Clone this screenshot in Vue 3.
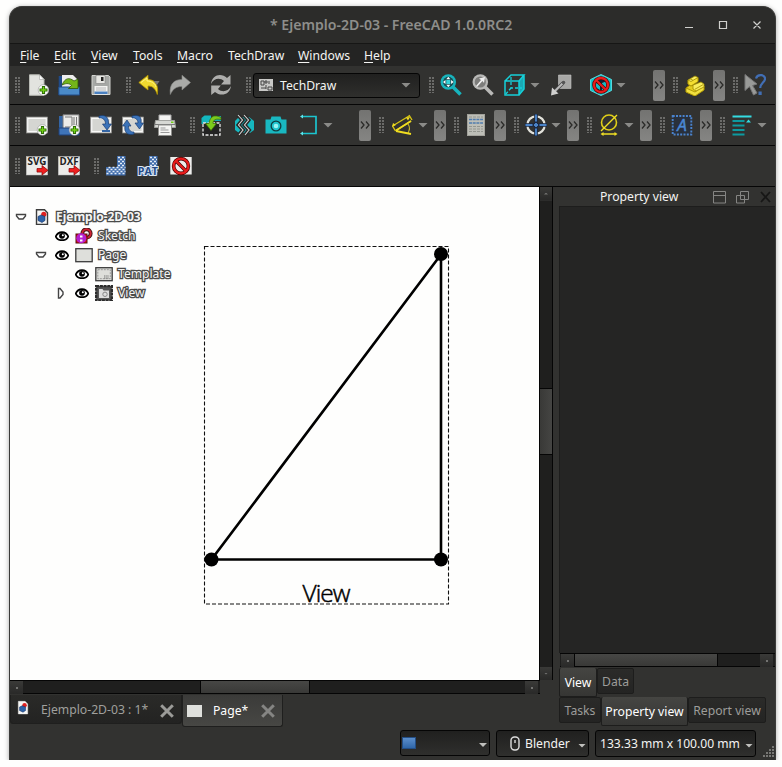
<script setup>
const menu = [
  ['F', 'ile', 34], ['E', 'dit', 37], ['V', 'iew', 42], ['T', 'ools', 44],
  ['M', 'acro', 51], ['', 'TechDraw', 70], ['W', 'indows', 66], ['H', 'elp', 40],
]

// [kind, gap before the item, icon name]
const rowMain = [
  ['grip', 5], ['icon', 6, 'new'], ['icon', 9, 'open'], ['icon', 10, 'save'],
  ['grip', 14], ['icon', 6, 'undo'], ['icon', 9, 'redo'], ['icon', 19, 'refresh'],
  ['grip', 14], ['combo', 1], ['grip', 9], ['icon', 5, 'fit'], ['icon', 10, 'fitsel'],
  ['icon', 10, 'cube'], ['arrow', 4], ['icon', 10, 'align'], ['icon', 18, 'nocube'], ['arrow', 4],
  ['more', 27], ['grip', 8], ['icon', 5, 'bricks'], ['more', 7], ['grip', 8], ['icon', 5, 'whats'],
]
const rowDraw = [
  ['grip', 5], ['icon', 5, 'page'], ['icon', 10, 'template'], ['icon', 10, 'redraw'], ['icon', 10, 'redrawAll'], ['icon', 10, 'print'],
  ['grip', 14], ['icon', 5, 'insert'], ['icon', 10, 'broken'], ['icon', 10, 'camera'], ['icon', 11, 'bracket'], ['arrow', 3],
  ['more', 26], ['grip', 8], ['icon', 6, 'angle'], ['arrow', 5], ['more', 6], ['grip', 8], ['icon', 5, 'sheet'],
  ['more', 7], ['grip', 8], ['icon', 5, 'target'], ['arrow', 4], ['more', 6], ['grip', 8], ['icon', 5, 'diameter'], ['arrow', 4],
  ['more', 6], ['grip', 8], ['icon', 5, 'annotate'], ['more', 7], ['grip', 8], ['icon', 5, 'lines'], ['arrow', 4],
]
const rowExport = [
  ['grip', 5], ['icon', 5, 'svg'], ['icon', 10, 'dxf'], ['grip', 14], ['icon', 5, 'hatch'], ['icon', 10, 'pat'], ['icon', 11, 'nohatch'],
]
const toolbars = [rowMain, rowDraw, rowExport]

const plus = '<circle cx="16.5" cy="16" r="5.300" fill="#fff" stroke="#999" stroke-width=".6"/><path d="M16.500 12v8M12.500 16h8" stroke="#2c6b05" stroke-width="3.200"/><path d="M16.500 13v6M13.500 16h6" stroke="#73d216" stroke-width="1.300"/>'
const mag = (c, d) => `<path d="M13 13l7.500 7.500" stroke="${c}" stroke-width="3.600"/><circle cx="8.300" cy="8" r="7.800" fill="${c}"/><circle cx="8.300" cy="8" r="5.600" fill="${d}"/>`
const cubeLines = '<path d="M1 6L7 1h13v14l-5 6H1z" fill="#333331"/><path d="M15 7l5-6v14l-5 6z" fill="#1aa9b5"/><path d="M1 7h14v14H1zM1 7l6-6h13l-5 6M20 1v14l-5 6" fill="none" stroke="#16d0d8" stroke-width="1.500"/><path d="M7 3v11h11M7 14l-6 7" fill="none" stroke="#16d0d8" stroke-width="1.300" stroke-dasharray="3 2"/>'
const ban = (r) => `<g fill="none"><circle cx="11" cy="11" r="${r}" stroke="#4a0000" stroke-width="3.600"/><path d="M${11 - r * 0.7} ${11 - r * 0.7}L${11 + r * 0.7} ${11 + r * 0.7}" stroke="#4a0000" stroke-width="3.400"/><circle cx="11" cy="11" r="${r}" stroke="#e81c1c" stroke-width="2.300"/><path d="M${11 - r * 0.7} ${11 - r * 0.7}L${11 + r * 0.7} ${11 + r * 0.7}" stroke="#e81c1c" stroke-width="2.100"/></g>`
const redArrow = '<path d="M11 13.500h5v-3l6 4.800-6 4.800v-3h-5z" fill="#ef2020" stroke="#800" stroke-width=".7"/>'
const label = (t) => `<rect x=".3" y="1.500" width="21.400" height="18.500" fill="#ecece9" stroke="#bbb" stroke-width=".5"/><text x="11" y="10" text-anchor="middle" textLength="19" lengthAdjust="spacingAndGlyphs" font-family="Open Sans" font-weight="700" font-size="10" fill="#222">${t}</text>`
const hatchPoly = 'M1 12h11V1h8.500v19.500H1z'
const hatchShape = `<path d="${hatchPoly}" fill="#3f6cab"/><path d="M13 2.500h7M13 6.500h7M13 10.500h7M1.500 14.500h18.500M1.500 18.500h18.500" stroke="#e6edf6" stroke-width="1.700" stroke-dasharray="2 2"/><path d="M15 4.500h5M15 8.500h5M3.500 12.500h17M3.500 16.500h17" stroke="#e6edf6" stroke-width="1.700" stroke-dasharray="2 2"/>`
const sheetBox = '<rect x=".5" y="3" width="21" height="16" fill="#e4e4e1" stroke="#8d8d8a" stroke-width=".7"/><rect x="1.900" y="4.500" width="18.200" height="13" fill="#d5d6d2" stroke="#fff" stroke-width=".8"/>'

const icons = {
  new: '<path d="M2.500.8h10l4.500 4.500v16h-14.500z" fill="#e2e3df" stroke="#b9bbb5"/><path d="M12.500.8v4.700h4.500z" fill="#fff" stroke="#a5a6a2" stroke-width=".6"/>' + plus,
  open: '<path d="M.7 2h7v18h-7z" fill="#204a87"/><path d="M4 1h11l4 4v9H4z" fill="#eee"/><path d="M.8 13h20.700v8H.8z" fill="#4a8ac8" stroke="#204a87"/><path d="M4 11C7 4 11 3 16 7l4-2v9.500h-9.500l3-3c-3-3-6-2-9.500-.5z" fill="#73b51a" stroke="#2f5906" stroke-width=".8"/>',
  save: '<path d="M2 1.500h16.500l1.500 1.500v17.500H2z" fill="#a6a8a5" stroke="#d3d4d0"/><rect x="6" y="1.500" width="9" height="8" fill="#e6e6e2" stroke="#777" stroke-width=".5"/><rect x="11" y="3" width="2.500" height="4" fill="#222"/><rect x="4.500" y="12" width="13" height="8.500" fill="#f2f2f0"/><path d="M6 14h10M6 16h10" stroke="#aaa" stroke-width=".8"/><rect x="4.500" y="17.500" width="13" height="2.500" fill="#4a80c0"/>',
  undo: '<path d="M.8 8.500L10 1.200v4.300c6 0 11 4 9.300 15C17.500 15 15 12 10 12v4z" fill="#f0da30" stroke="#b49500" stroke-width=".8"/><path d="M15.500 7h6l-2.500 4z" fill="#777"/><path d="M3 8.500l6-4.500v3c4 0 8 2 9 6" fill="none" stroke="#fff58c" stroke-width=".9"/>',
  redo: '<path d="M21.500 8.500L13 1.200v4.300C6 5.500 0 9 1.300 20.500 4 15 7 12.500 13 12.500V16z" fill="#aaaba8" stroke="#8a8b88" stroke-width=".6"/>',
  refresh: '<path d="M1 10C2 0 12-1 17 4l3.500-3v9.500h-9.500L14 7C10 3.500 4 4 1 10zM21 12c-1 9.500-11 10.500-16 6L1.200 21v-9.500h9.600L8 15c4 3.500 10 3 13-3z" fill="#aeaeac"/>',
  fit: mag('#17b4bd', '#37d3d8') + '<circle cx="8.300" cy="8" r="5.400" fill="#174f56"/><path d="M8.300 2.700l2 2.500h-4zM8.300 13.300l2-2.500h-4zM3 8l2.500-2v4zM13.600 8l-2.500-2v4z" fill="#fff"/><rect x="6.300" y="6" width="4" height="4" fill="#37d3d8"/>',
  fitsel: mag('#b9b9b7', '#7d7d7b') + '<path d="M4 12l5-6-2-1.500 6-1.500-1 6-1.500-2L5 13z" fill="#eee"/>',
  cube: cubeLines,
  align: '<path d="M8.500 1h12.500v13.500H8.500z" fill="#a8a8a6" stroke="#c5c5c3" stroke-width=".6"/><path d="M13 9l-8 8" stroke="#444" stroke-width="3.300"/><path d="M13 9l-8 8" stroke="#bbb" stroke-width="2"/><path d="M1 21.500l1-8 6.500 6z" fill="#d0d0ce"/><circle cx="13.500" cy="8.500" r="1.800" fill="#555"/>',
  nocube: '<path d="M11 .5l10.500 5v11L11 21.500.5 16.500v-11z" fill="#14c3cc" stroke="#5ee0e4" stroke-width=".9"/><circle cx="11" cy="11" r="7" fill="#123"/><path d="M12 9l5-2v6l-5 4z" fill="#18b9c2"/><path d="M5 9l5 1v6l-5-3z" fill="#18b9c2"/>' + ban(7),
  bricks: '<g stroke="#a18b00" stroke-width=".8"><path d="M2 14l4-3 14 1v4l-9 6-9-4z" fill="#e3cc1f"/><path d="M2 14l9 4 9-6v4l-9 6-9-4z" fill="#f1e03f"/><path d="M4 6l7-4 3 1.500v4L7 12 4 10z" fill="#f8ee65"/><path d="M4 6l3 1.500L14 3.500v4L7 12 4 10z" fill="#f4df31"/><path d="M9 11l8-3 3 2v3l-8 4-3-2z" fill="#f8ed5c"/><path d="M6 4.800l3 1.500M11 15.200l8-4.500" fill="none"/></g>',
  whats: '<path d="M1 .5v16l4.500-4 4 8.500 3.500-2-4.500-7.500L13 10z" fill="#999a98" stroke="#777"/><path d="M12 4.500c1.500-5 9.500-4 9 .5-.3 3.500-4.500 4-4.800 9" fill="none" stroke="#416eb4" stroke-width="2.200"/><rect x="14.500" y="17.500" width="3.200" height="3.500" fill="#416eb4"/>',
  page: sheetBox + plus,
  template: '<path d="M1 2h5v16H1z" fill="#3465a4"/><path d="M5 .8h16v14H5z" fill="#ececea" stroke="#777"/><path d="M7 3h7v10H7M16 3v10M18.500 3v10" stroke="#777" fill="none"/><path d="M1 14h20v7H1z" fill="#3f74b8" stroke="#1f417a"/>' + plus,
  redraw: sheetBox + '<path d="M9 2c7-2 10 2 9.500 8h3L17 16l-4.500-6h3C15.500 6 13 3.500 9 4z" fill="#3b73b9" stroke="#1a3c70" stroke-width=".7"/><path d="M12 17h8" stroke="#3465a4" stroke-width="2"/>',
  redrawAll: sheetBox + '<path d="M10 2c7-2 10 1 9 7h2.500L17.500 15 13 9h3C16 6 14 3.500 10 4zM12 20C5 22 2 18 3 12H.5L5 6l4 6H6.500c0 4 2 6 5.500 6z" fill="#3b73b9" stroke="#1a3c70" stroke-width=".7"/>',
  print: '<path d="M5 1h12v8H5z" fill="#f4f4f2" stroke="#aaa"/><path d="M1.500 6.500h19l1 7h-21z" fill="#d7d8d4" stroke="#a3a4a0"/><path d="M1 10.500h20" stroke="#777"/><path d="M4.500 11h13v10.500h-13z" fill="#f4f4f2" stroke="#8d8d8a"/><path d="M6.500 14h5M6.500 16h8M6.500 18.500h9" stroke="#999"/><rect x="17" y="7.500" width="2.500" height="1.500" fill="#73d216"/>',
  insert: '<path d="M.5 4l3-2.500H10V8L7 10H.5z" fill="#13b7bf"/><path d="M12 2h8v5h-8z" fill="#15aab3"/><rect x="2" y="9" width="17" height="12" fill="#222" stroke="#e8e8e8" stroke-width="1.300" stroke-dasharray="3 1.500"/><path d="M20 3.500c-6-3-11-2-12 6H4.500l5.500 7 5.500-7H12c0-4 3-5 8-4z" fill="#7ccb1d" stroke="#3b6b08" stroke-width=".7"/>',
  broken: '<path d="M2 7l4-4h10l5 4v9l-4 3H6l-4-3z" fill="#16b7bf"/><path d="M5 1l4.500 5-4 5 4.500 5-4 5M11 1l4.500 5-4 5 4.500 5-4 5" stroke="#292928" stroke-width="4" fill="none"/><path d="M5 1l4.500 5-4 5 4.500 5-4 5M11 1l4.500 5-4 5 4.500 5-4 5" stroke="#d6d6d6" stroke-width="1.100" fill="none"/>',
  camera: '<path d="M.5 5.500h5l1-3h9l1 3h5v14H.5z" fill="#19b8c1"/><circle cx="11" cy="12" r="5.500" fill="#103d40"/><circle cx="11" cy="12" r="4.200" fill="#20c5ce"/><circle cx="11" cy="12" r="2.300" fill="#9af4f4"/>',
  bracket: '<path d="M4 2.500h14v17H4" fill="none" stroke="#1cc5cf" stroke-width="1.700"/><path d="M2 2.500l3-2v4zM2 19.500l3-2v4z" fill="#5ae4ea"/>',
  angle: '<path d="M1.500 12L18 2M1.500 12l3 5M18 1l3 5M5 16.500L20 7" fill="none" stroke="#d6c413" stroke-width="1.400"/><path d="M5 16.500L20 7M5 17l15 3" stroke="#efdc20" stroke-width="2"/><path d="M16 9c3 3 3 6 1 10" fill="none" stroke="#efdc20"/><path d="M1 13l1-4 3 2zM19 3l-4 .5 2 3z" fill="#efdc20"/>',
  sheet: '<rect x="2.500" y=".5" width="17" height="21" fill="#bdbeb7" stroke="#a2a29b"/><path d="M4 3h14M4 12.500h14M4 15h14M4 17.500h14" stroke="#94968f" stroke-dasharray="3 1"/><path d="M4 5.500h14M4 9h14" stroke="#4f7cae" stroke-width="1.400" stroke-dasharray="3 .7"/>',
  target: '<circle cx="11" cy="11" r="8.700" fill="none" stroke="#e2e2db" stroke-width="2.200"/><path d="M11 0v22M0 11h22" stroke="#1b2942" stroke-width="3.600"/><path d="M11 .5v7M11 14.500v7M.5 11h7M14.500 11h7M11 9v4M9 11h4" stroke="#4a83c7" stroke-width="1.900"/>',
  diameter: '<circle cx="11" cy="8.500" r="7.500" fill="none" stroke="#dfcd18" stroke-width="1.600"/><path d="M3 17L19 1M4 20h14" stroke="#f0df24" stroke-width="1.400"/><path d="M2.500 20l3-2v4zM19.500 20l-3-2v4z" fill="#f0df24"/>',
  annotate: '<rect x="1.700" y="2" width="18.600" height="18.500" fill="#29303b" stroke="#4a83cd" stroke-width="1.900" stroke-dasharray="2 1.300"/><text x="11" y="17" text-anchor="middle" font-family="Open Sans" font-style="italic" font-size="17" fill="#4a88d4" stroke="#4a88d4" stroke-width=".5">A</text>',
  lines: '<path d="M1.500 2.500h19" stroke="#34dce1" stroke-width="1.800"/><path d="M1.500 7h12M1.500 11.500h12M1.500 16h12M1.500 20.500h12" stroke="#0d9aa0" stroke-width="2"/><path d="M15 8.500l2.500-3 2.500 3z" fill="#34dce1"/>',
  svg: label('SVG') + redArrow,
  dxf: label('DXF') + redArrow,
  hatch: hatchShape,
  pat: hatchShape + '<text x="10.800" y="20" text-anchor="middle" textLength="20" lengthAdjust="spacingAndGlyphs" font-family="Open Sans" font-weight="700" font-size="10" fill="#234a86" stroke="#dbe5f2" stroke-width="2" paint-order="stroke">PAT</text>',
  nohatch: '<rect x=".3" y="2" width="21.400" height="17.500" fill="#ededeb"/>' + ban(7.4),
}

const docIcon = '<path d="M1.500.8h8l3 3v11.700h-11z" fill="#f6f6f4" stroke="var(--edge)" stroke-width="var(--ew)"/><circle cx="8.800" cy="5.300" r="2.600" fill="#e02020"/><path d="M3 7.500l3-1.500 4 1.500v4L7 13.500l-4-2z" fill="#2d62a8" stroke="#17305e" stroke-width=".6"/>'
const treeIcons = {
  doc: docIcon,
  sketch: '<circle cx="11.500" cy="5.500" r="4.200" fill="none" stroke="#3a1515" stroke-width="3.800"/><circle cx="11.500" cy="5.500" r="4.200" fill="none" stroke="#cf2233" stroke-width="2"/><rect x="1" y="6" width="11" height="9" fill="#e01010" stroke="#501010"/><circle cx="6.300" cy="10.200" r="5" fill="#b41fd0"/><path d="M5 7.500h2.500v2H5zM5 11.500h2.500v2H5z" fill="#fff"/>',
  page: '<rect x=".8" y="1.700" width="16.400" height="13" fill="#dedfdb" stroke="#3c3c3c" stroke-width="1.300"/>',
  template: '<rect x=".8" y="1.700" width="16.400" height="13" fill="#dedfdb" stroke="#3c3c3c" stroke-width="1.300"/><rect x="2.800" y="3.700" width="12.500" height="9" fill="none" stroke="#888" stroke-width=".8" stroke-dasharray="2 1"/><path d="M9 10h5M9 12h5" stroke="#777" stroke-dasharray="1.500 .7"/>',
  view: '<rect x="1.200" y="1" width="15.600" height="14.500" fill="#555"/><rect x="1.200" y="1" width="15.600" height="14.500" fill="none" stroke="#2c2c2c" stroke-width="2.400" stroke-dasharray="3 .7"/><path d="M4 4h3.500l1 1.500H14V13H4z" fill="#ddd"/><circle cx="10" cy="9.300" r="2.200" fill="none" stroke="#888"/>',
}
const tree = [
  { level: 'l0', open: 'down', icon: 'doc', text: 'Ejemplo-2D-03' },
  { level: 'l1', eye: true, icon: 'sketch', text: 'Sketch' },
  { level: 'l1', open: 'down', eye: true, icon: 'page', text: 'Page' },
  { level: 'l2', eye: true, icon: 'template', text: 'Template' },
  { level: 'l2', open: 'right', eye: true, icon: 'view', text: 'View' },
]
</script>

<template>
  <div class="window">
    <header class="title">
      <span class="caption">* Ejemplo-2D-03 - FreeCAD 1.0.0RC2</span>
      <svg class="controls" viewBox="0 0 80 14">
        <path d="M0 9.500h8M34.500 3.500h7v7h-7zM68.500 3.500l7 7M75.500 3.500l-7 7" />
      </svg>
    </header>

    <nav class="menu">
      <span v-for="m in menu" :key="m[1]" :style="{ width: m[2] + 'px' }"><u>{{ m[0] }}</u>{{ m[1] }}</span>
    </nav>

    <div v-for="(row, r) in toolbars" :key="r" class="toolbar" :class="'bar' + r">
      <div v-for="(t, i) in row" :key="i" :class="t[0]" :style="{ marginLeft: t[1] + 'px' }">
        <svg v-if="t[0] === 'icon'" viewBox="0 0 22 22" v-html="icons[t[2]]"></svg>
        <svg v-else-if="t[0] === 'more'" viewBox="0 0 12 10"><path d="M2 1.500l3 3.500-3 3.500M7 1.500l3 3.500-3 3.500" /></svg>
        <template v-else-if="t[0] === 'combo'">
          <svg class="wb" viewBox="0 0 14 12">
            <rect width="14" height="12" fill="#c9c9c7" />
            <path d="M2 2h3v4H2zM6 2h2v2H6zM10 2v3M2 9h5M7 6v4M9 8h4v3H9z" fill="none" stroke="#444" />
          </svg>
          <span>TechDraw</span><i class="arrow"></i>
        </template>
      </div>
    </div>

    <main class="body">
      <section class="mdi">
        <div class="view">
          <div class="canvas">
            <svg class="drawing" viewBox="0 0 529 493">
              <rect x="194.500" y="59.500" width="244" height="357.500" fill="none" stroke="#111" stroke-dasharray="4 2" stroke-width="1.100" />
              <path d="M201.500 372.500H431V67.500z" fill="none" stroke="#000" stroke-width="2.600" />
              <circle cx="201.500" cy="372.500" r="7" /><circle cx="431" cy="372.500" r="7" /><circle cx="431" cy="67" r="7" />
              <text class="viewlabel" x="292.500" y="415" textLength="48" lengthAdjust="spacing">View</text>
            </svg>
            <ul class="tree">
              <li v-for="n in tree" :key="n.text" :class="n.level">
                <svg class="twist" viewBox="0 0 12 12">
                  <path v-if="n.open === 'down'" d="M1.500 3.500h9v1.500L8 8H4L1.500 5z" />
                  <path v-if="n.open === 'right'" d="M3.500 1.500H5L8 5v2.500L5 11H3.500z" />
                </svg>
                <svg v-if="n.eye" class="eye" viewBox="0 0 14 10">
                  <path d="M.8 5.500C3-.2 11-.2 13.200 5.500 11 10.500 3 10.500.8 5.500z" fill="#fff" stroke="#000" stroke-width="1.800" />
                  <circle cx="7" cy="4.800" r="2.900" /><circle cx="7.800" cy="4.200" r="1" fill="#fff" />
                </svg>
                <svg class="node" :class="n.icon" :viewBox="n.icon === 'doc' ? '0 0 14 16' : '0 0 18 16'" v-html="treeIcons[n.icon]"></svg>
                <span :class="{ bold: n.level === 'l0' }">{{ n.text }}</span>
              </li>
            </ul>
          </div>
          <div class="vscroll"><b class="up"></b><div class="track t1"></div><div class="thumb"></div><div class="track t2"></div><b class="dn"></b></div>
        </div>
        <div class="hscroll"><b class="dot"></b><div class="track h1"></div><div class="thumb"></div><div class="track h2"></div><b class="dot"></b></div>
        <div class="doctabs">
          <div class="doctab first">
            <svg class="docico" viewBox="0 0 14 16" v-html="docIcon"></svg>
            <span>Ejemplo-2D-03 : 1*</span>
            <svg class="close" viewBox="0 0 14 14"><path d="M1.200 1.200l11.600 11.600M12.800 1.200L1.200 12.800" /></svg>
          </div>
          <div class="doctab active">
            <i class="pageico"></i><span>Page*</span>
            <svg class="close" viewBox="0 0 14 14"><path d="M1.200 1.200l11.600 11.600M12.800 1.200L1.200 12.800" /></svg>
          </div>
        </div>
      </section>

      <aside class="dock">
        <div class="docktitle">
          <span>Property view</span>
          <svg viewBox="0 0 60 14">
            <path d="M1.500 1.500h12v11.500h-12zM1.500 5.500h12M28.500 1.500h8v8h-8zM24.500 5.500h8v7.500h-8z" fill="none" stroke="#858583" />
            <path d="M49 2l9 10M58 2l-9 10" stroke="#171716" stroke-width="1.800" />
          </svg>
        </div>
        <div class="props"></div>
        <div class="hscroll side"><b class="dot"></b><div class="thumb"></div><div class="track"></div><b class="dot"></b></div>
        <div class="tabs"><span class="on w1">View</span><span class="w2">Data</span></div>
        <div class="tabs lower"><span class="w3">Tasks</span><span class="on w4">Property view</span><span class="w5">Report view</span></div>
      </aside>
    </main>

    <footer class="status">
      <div class="box b1"><i class="swatch"></i><i class="arrow"></i></div>
      <div class="box b2">
        <svg viewBox="0 0 10 15"><rect x="1" y="1" width="8" height="13" rx="3.500" /><path d="M5 4v3" /></svg>
        <span>Blender</span><i class="arrow"></i>
      </div>
      <div class="box b3"><span>133.33 mm x 100.00 mm</span><i class="arrow"></i></div>
      <svg class="sizer" viewBox="0 0 12 12">
        <path d="M10 1h2M7 4h2M10 4h2M4 7h2M7 7h2M10 7h2M1 10h2M4 10h2M7 10h2M10 10h2" />
      </svg>
    </footer>
  </div>
</template>

<style>
body { background: #fefefd; overflow: hidden; }
</style>

<style scoped>
* { box-sizing: border-box; }
.window {
  display: flex; flex-direction: column; width: 767px; height: 754px; margin: 6px 0 0 9px;
  border: 1px solid #3b3b39; border-bottom: 0; border-radius: 13px 13px 0 0; overflow: hidden; background: #323230;
  box-shadow: 0 1px 5px rgba(0, 0, 0, .35); font: 12.200px "Noto Sans", sans-serif; color: #f4f4f2;
}
svg { display: block; flex: none; }
.title { flex: none; display: flex; justify-content: flex-end; align-items: center; height: 37px; background: #2c2c2a; border-bottom: 1px solid #161615; }
.caption { width: 244px; margin-top: -1px; white-space: nowrap; font-size: 14.100px; font-weight: 600; color: #8e8e8b; }
.controls { width: 80px; height: 14px; margin: 0 10px 0 171px; fill: none; stroke: #d0d0cd; stroke-width: 1.200; }
.menu { flex: none; display: flex; align-items: center; height: 22px; padding-left: 10px; background: #242423; white-space: nowrap; }
.menu span { flex: none; }
u { text-underline-offset: 2px; }
.toolbar { flex: none; display: flex; align-items: center; border-bottom: 1px solid #060606; height: 41px; background: #323230; }
.toolbar.bar0 { height: 39px; }
.toolbar > div { flex: none; }
.icon, .icon svg { width: 22px; height: 22px; }
.grip { width: 6px; height: 16px; background: radial-gradient(circle at 1px 1px, #6b6b69 .8px, transparent 1px) 0 0 / 3px 3px; }
.arrow { width: 10px; height: 5px; background: #8b8b88; clip-path: polygon(0 0, 100% 0, 50% 100%); }
.more { display: flex; align-items: center; width: 12px; height: 31px; border-radius: 2px; background: linear-gradient(#737371, #858583); }
.more svg { width: 12px; height: 10px; fill: none; stroke: #2b2b29; stroke-width: 1.300; }
.combo { display: flex; align-items: center; width: 167px; height: 25px; padding: 0 8px 0 5px; border: 1px solid #050505; border-radius: 3px; background: linear-gradient(#20201f, #2f2f2d); }
.combo span { flex: 1; margin-left: 7px; }
.wb { width: 14px; height: 12px; }
.body { flex: none; display: flex; height: 541px; }
.mdi { flex: none; width: 543px; }
.view { display: flex; height: 494px; }
.canvas { flex: none; position: relative; width: 529px; height: 493px; background: #fefefd; }
.drawing { width: 529px; height: 493px; }
.viewlabel { font-family: "Open Sans", sans-serif; font-weight: 300; font-size: 24.500px; stroke: #000; stroke-width: .5px; }
.tree { position: absolute; left: 5px; top: 20px; margin: 0; padding: 0; list-style: none; }
.tree li { display: flex; align-items: center; height: 19px; }
.tree .l1 { padding-left: 20px; }
.tree .l2 { padding-left: 40px; }
.tree span { margin-left: 5px; color: #f4f4f4; font-size: 12.100px; -webkit-text-stroke: 2.600px #4b4b4a; paint-order: stroke fill; }
.tree .bold { font-weight: 700; font-size: 12px; margin-left: 7px; letter-spacing: -.02px; }
.twist { width: 12px; height: 12px; fill: #fff; stroke: #444; stroke-width: 1.400; }
.eye { width: 14px; height: 10px; margin: 0 -1px 0 8px; }
.node { width: 18px; height: 16px; margin-left: 7px; --edge: #3c3c3c; --ew: 1.400; }
.node.doc { width: 14px; margin-left: 8px; }
.vscroll { display: flex; flex-direction: column; width: 14px; height: 493px; border-left: 1px solid #050505; border-right: 1px solid #050505; background: #1f1f1e; }
b { display: flex; flex: none; align-items: center; justify-content: center; width: 13px; height: 13px; background: linear-gradient(#3a3a38, #292928); }
b::after { content: ""; width: 2px; height: 2px; background: #737371; }
.up::after { width: 4px; clip-path: polygon(0 100%, 50% 0, 100% 100%); }
.dn::after { width: 4px; clip-path: polygon(0 0, 100% 0, 50% 100%); }
.vscroll b { width: 12px; }
.t1 { height: 188px; border-top: 1px solid #2c2c2b; }
.vscroll .thumb { height: 67px; border-block: 1px solid #050505; background: linear-gradient(90deg, #393937, #454543); }
.t2 { flex: 1; }
.hscroll { display: flex; width: 530px; height: 13px; border-top: 1px solid #050505; border-bottom: 1px solid #050505; background: #1f1f1e; margin-top: -1px; }
.hscroll .thumb { height: 11px; border-inline: 1px solid #050505; background: linear-gradient(#474745, #393937); }
.hscroll b:last-child { margin-right: 2px; }
.h1 { width: 177px; }
.mdi .hscroll .thumb { width: 110px; }
.hscroll .h2 { flex: 1; }
.mdi .hscroll { height: 14px; }
.mdi .hscroll .thumb { height: 12px; }
.doctabs { display: flex; align-items: flex-start; margin-top: 1px; }
.doctab { display: flex; align-items: center; border: 1px solid #1f1f1e; border-top: 0; border-radius: 0 0 3px 3px; }
.first { width: 172px; height: 29px; padding-left: 6px; background: linear-gradient(#2a2a28, #232322); color: #a0a09d; }
.active { width: 101px; height: 32px; padding-left: 4px; background: linear-gradient(#3b3b39, #474744); color: #fff; }
.first span { width: 119px; margin-left: 12px; }
.active span { width: 49px; margin-left: 11px; }
.docico { width: 12px; height: 15px; --edge: #eee; --ew: .5; margin-top: -4px; }
.pageico { width: 15px; height: 12px; background: #dfe0dc; }
.close { width: 14px; height: 14px; margin-top: 3px; stroke: #9b9b98; stroke-width: 3; }
.active .close { margin-top: 1px; margin-left: -1px; stroke: #858583; }
.dock { flex: none; width: 216px; margin-left: 6px; }
.docktitle { display: flex; align-items: center; height: 19px; }
.docktitle span { width: 112px; margin-left: 41px; }
.docktitle svg { width: 60px; height: 14px; }
.props { height: 447px; border: 1px solid #1d1d1c; border-width: 1px 0 0 1px; background: #252524; }
.side { width: 215px; height: 14px; margin: 0 0 0 1px; }
.side b:first-child { margin-left: 1px; }
.side .thumb { width: 144px; height: 12px; }
.side .track { flex: 1; }
.tabs { display: flex; align-items: flex-start; height: 29px; padding-top: 1px; }
.tabs span { display: flex; align-items: center; justify-content: center; height: 26px; border: 1px solid #1d1d1c; border-radius: 2px; background: linear-gradient(#2b2b29, #242423); color: #9d9d9a; white-space: nowrap; }
.tabs .on { height: 29px; padding-top: 1px; background: linear-gradient(#454542, #363634); color: #fff; border-top: 0; }
.w1 { width: 38px; } .w2 { width: 37px; } .w3 { width: 42px; } .w4 { width: 87px; } .w5 { width: 78px; }
.status { flex: none; display: flex; gap: 6px; height: 32px; padding: 2px 0 0 390px; }
.box { display: flex; align-items: center; height: 27px; border: 1px solid #050505; border-radius: 3px; background: linear-gradient(#20201f, #2f2f2d); white-space: nowrap; }
.box .arrow { width: 8px; height: 4px; margin: 4px 2px 0 auto; background: #c0c0bd; }
.b1 { width: 90px; height: 26px; padding-left: 1px; }
.b2 { width: 93px; padding-left: 13px; }
.b3 { width: 161px; padding-left: 4px; }
.b3 span { font-size: 12.100px; }
.b2 svg { width: 10px; height: 15px; margin-right: 5px; fill: none; stroke: #ddd; stroke-width: 1.400; }
.swatch { width: 14px; height: 12px; background: linear-gradient(#5b8ecb, #2f66a8); border: 1px solid #244e85; }
.sizer { width: 12px; height: 12px; margin: 16px 0 0 0; stroke: #8e8e8b; stroke-width: 1.500; }
</style>
